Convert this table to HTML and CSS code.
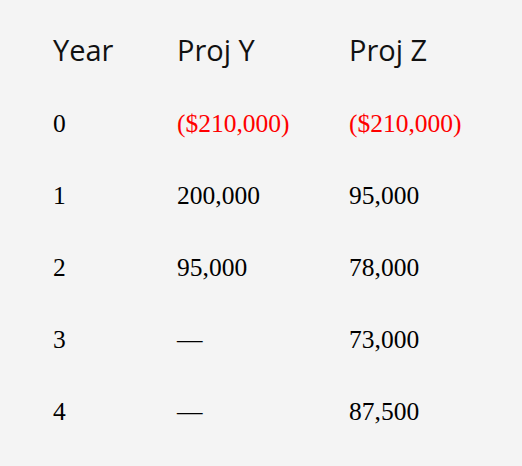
FILE: index.html
```html
<!DOCTYPE html>
<html>
<head>
<meta charset="utf-8">
<link rel="stylesheet" href="styles.css">
</head>
<body>
<div class="table">
  <div class="row head">
    <div class="c1">Year</div>
    <div class="c2">Proj Y</div>
    <div class="c3">Proj Z</div>
  </div>
  <div class="row">
    <div class="c1">0</div>
    <div class="c2 neg">($210,000)</div>
    <div class="c3 neg">($210,000)</div>
  </div>
  <div class="row">
    <div class="c1">1</div>
    <div class="c2">200,000</div>
    <div class="c3">95,000</div>
  </div>
  <div class="row">
    <div class="c1">2</div>
    <div class="c2">95,000</div>
    <div class="c3">78,000</div>
  </div>
  <div class="row">
    <div class="c1">3</div>
    <div class="c2">—</div>
    <div class="c3">73,000</div>
  </div>
  <div class="row">
    <div class="c1">4</div>
    <div class="c2">—</div>
    <div class="c3">87,500</div>
  </div>
</div>
</body>
</html>
```
FILE: styles.css
```css
html, body {
  margin: 0;
  background: #f4f4f4;
}
.table {
  padding: 13px 0 0 53px;
}
.row {
  display: grid;
  grid-template-columns: 124px 172px 1fr;
  height: 72px;
  line-height: 72px;
  font-family: "Liberation Serif", "Times New Roman", serif;
  font-size: 25.5px;
  color: #000;
  white-space: nowrap;
}
.row.head {
  height: 75px;
  line-height: 74px;
  font-family: "Open Sans", "Noto Sans", sans-serif;
  font-size: 29px;
  color: #111;
}
.neg {
  color: #ff0000;
}
```
